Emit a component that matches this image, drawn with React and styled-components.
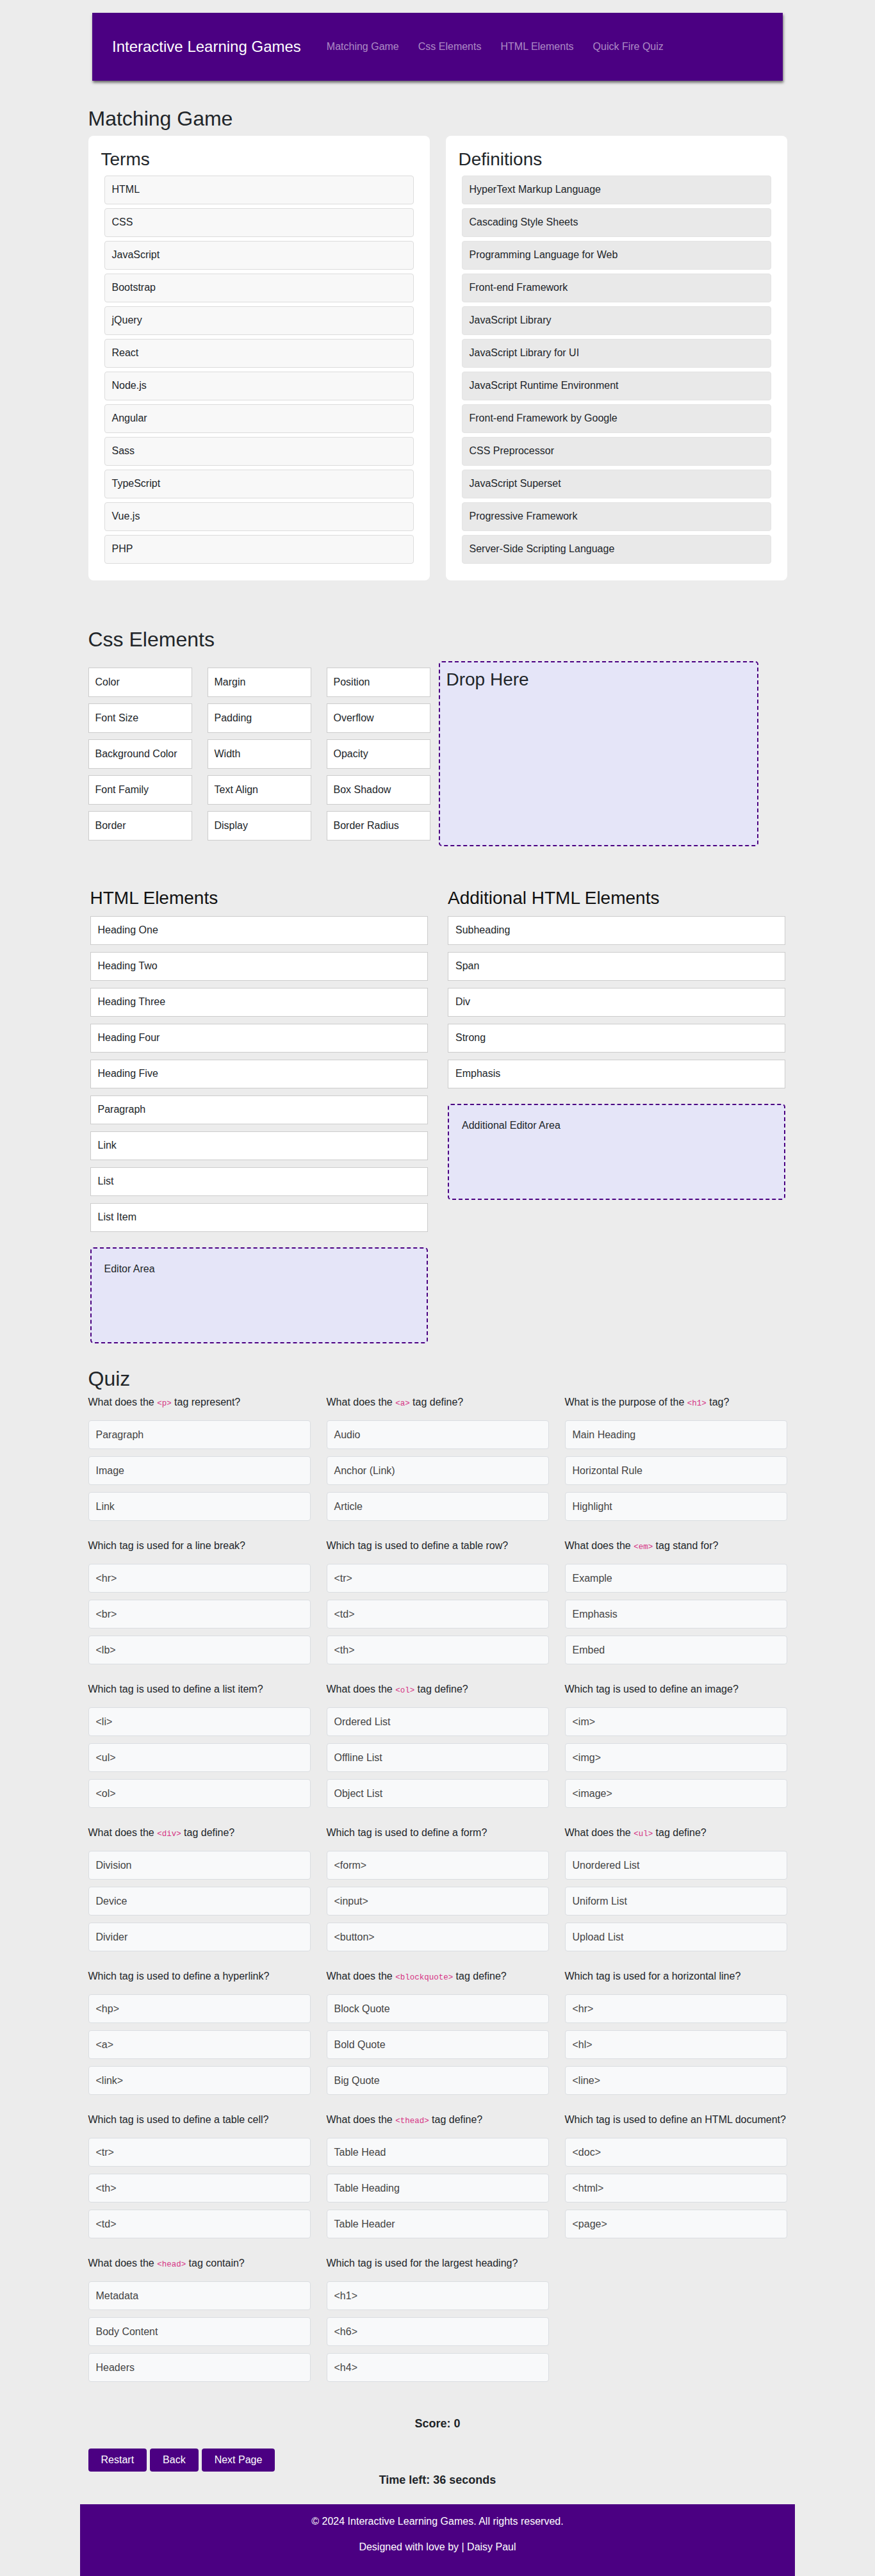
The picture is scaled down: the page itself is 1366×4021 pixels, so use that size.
import React from "react";
import styled, { createGlobalStyle } from "styled-components";

const terms = [
  "HTML", "CSS", "JavaScript", "Bootstrap", "jQuery", "React",
  "Node.js", "Angular", "Sass", "TypeScript", "Vue.js", "PHP",
];

const definitions = [
  "HyperText Markup Language",
  "Cascading Style Sheets",
  "Programming Language for Web",
  "Front-end Framework",
  "JavaScript Library",
  "JavaScript Library for UI",
  "JavaScript Runtime Environment",
  "Front-end Framework by Google",
  "CSS Preprocessor",
  "JavaScript Superset",
  "Progressive Framework",
  "Server-Side Scripting Language",
];

const cssProps = [
  "Color", "Margin", "Position",
  "Font Size", "Padding", "Overflow",
  "Background Color", "Width", "Opacity",
  "Font Family", "Text Align", "Box Shadow",
  "Border", "Display", "Border Radius",
];

const htmlElements = [
  "Heading One", "Heading Two", "Heading Three", "Heading Four", "Heading Five",
  "Paragraph", "Link", "List", "List Item",
];

const extraElements = ["Subheading", "Span", "Div", "Strong", "Emphasis"];

// question: [before, code, after] — code may be empty
const questions = [
  { q: ["What does the ", "<p>", " tag represent?"], options: ["Paragraph", "Image", "Link"] },
  { q: ["What does the ", "<a>", " tag define?"], options: ["Audio", "Anchor (Link)", "Article"] },
  { q: ["What is the purpose of the ", "<h1>", " tag?"], options: ["Main Heading", "Horizontal Rule", "Highlight"] },
  { q: ["Which tag is used for a line break?"], options: ["<hr>", "<br>", "<lb>"] },
  { q: ["Which tag is used to define a table row?"], options: ["<tr>", "<td>", "<th>"] },
  { q: ["What does the ", "<em>", " tag stand for?"], options: ["Example", "Emphasis", "Embed"] },
  { q: ["Which tag is used to define a list item?"], options: ["<li>", "<ul>", "<ol>"] },
  { q: ["What does the ", "<ol>", " tag define?"], options: ["Ordered List", "Offline List", "Object List"] },
  { q: ["Which tag is used to define an image?"], options: ["<im>", "<img>", "<image>"] },
  { q: ["What does the ", "<div>", " tag define?"], options: ["Division", "Device", "Divider"] },
  { q: ["Which tag is used to define a form?"], options: ["<form>", "<input>", "<button>"] },
  { q: ["What does the ", "<ul>", " tag define?"], options: ["Unordered List", "Uniform List", "Upload List"] },
  { q: ["Which tag is used to define a hyperlink?"], options: ["<hp>", "<a>", "<link>"] },
  { q: ["What does the ", "<blockquote>", " tag define?"], options: ["Block Quote", "Bold Quote", "Big Quote"] },
  { q: ["Which tag is used for a horizontal line?"], options: ["<hr>", "<hl>", "<line>"] },
  { q: ["Which tag is used to define a table cell?"], options: ["<tr>", "<th>", "<td>"] },
  { q: ["What does the ", "<thead>", " tag define?"], options: ["Table Head", "Table Heading", "Table Header"] },
  { q: ["Which tag is used to define an HTML document?"], options: ["<doc>", "<html>", "<page>"] },
  { q: ["What does the ", "<head>", " tag contain?"], options: ["Metadata", "Body Content", "Headers"] },
  { q: ["Which tag is used for the largest heading?"], options: ["<h1>", "<h6>", "<h4>"] },
];

const App = () => {
  return (
    <>
      <GlobalStyle />
      <Navbar>
        <Brand>Interactive Learning Games</Brand>
        <NavLink>Matching Game</NavLink>
        <NavLink>Css Elements</NavLink>
        <NavLink>HTML Elements</NavLink>
        <NavLink>Quick Fire Quiz</NavLink>
      </Navbar>

      <Main>
        <Section $top={40}>
          <SectionTitle>Matching Game</SectionTitle>
          <CardRow>
            <Card>
              <CardTitle>Terms</CardTitle>
              <MatchList>
                {terms.map((t) => (
                  <MatchItem key={t}>{t}</MatchItem>
                ))}
              </MatchList>
            </Card>
            <Card>
              <CardTitle>Definitions</CardTitle>
              <MatchList>
                {definitions.map((d) => (
                  <MatchItem key={d} $definition>{d}</MatchItem>
                ))}
              </MatchList>
            </Card>
          </CardRow>
        </Section>

        <Section $top={73}>
          <SectionTitle $gap={15}>Css Elements</SectionTitle>
          <CssRow>
            <CssGrid>
              {cssProps.map((p) => (
                <CssBox key={p}>{p}</CssBox>
              ))}
            </CssGrid>
            <DropZone>
              <DropTitle>Drop Here</DropTitle>
            </DropZone>
          </CssRow>
        </Section>

        <Section $top={64}>
          <HtmlColumns>
            <HtmlColumn>
              <ColumnTitle>HTML Elements</ColumnTitle>
              {htmlElements.map((h) => (
                <HtmlItem key={h}>{h}</HtmlItem>
              ))}
              <EditorArea>Editor Area</EditorArea>
            </HtmlColumn>
            <HtmlColumn>
              <ColumnTitle>Additional HTML Elements</ColumnTitle>
              {extraElements.map((h) => (
                <HtmlItem key={h}>{h}</HtmlItem>
              ))}
              <EditorArea>Additional Editor Area</EditorArea>
            </HtmlColumn>
          </HtmlColumns>
        </Section>

        <Section $top={36}>
          <SectionTitle $gap={6}>Quiz</SectionTitle>
          <QuizGrid>
            {questions.map((item, i) => (
              <QuestionBlock key={i}>
                <Question>
                  {item.q[0]}
                  {item.q[1] && <Code>{item.q[1]}</Code>}
                  {item.q[2]}
                </Question>
                {item.options.map((o) => (
                  <Option key={o}>{o}</Option>
                ))}
              </QuestionBlock>
            ))}
          </QuizGrid>
        </Section>

        <Score>Score: 0</Score>
        <ButtonRow>
          <Button>Restart</Button>
          <Button>Back</Button>
          <Button>Next Page</Button>
        </ButtonRow>
        <Timer>Time left: 36 seconds</Timer>
      </Main>

      <Footer>
        <FooterText>© 2024 Interactive Learning Games. All rights reserved.</FooterText>
        <FooterText>Designed with love by | Daisy Paul</FooterText>
      </Footer>
    </>
  );
};

export default App;

const GlobalStyle = createGlobalStyle`
  * { box-sizing: border-box; }
  body {
    margin: 0;
    background: #ececec;
    font-family: "Liberation Sans", Arial, sans-serif;
    font-size: 16px;
    line-height: 1.5;
    color: #212529;
  }
`;

const Navbar = styled.nav`
  width: 1078px;
  margin: 20px auto 0;
  padding: 35px 31px;
  background: #4b0082;
  display: flex;
  align-items: center;
  box-shadow: 1px 3px 4px rgba(0, 0, 0, 0.55);
`;

const Brand = styled.span`
  font-size: 24px;
  line-height: 36px;
  color: #fff;
  margin-right: 25px;
`;

const NavLink = styled.a`
  padding: 0 15px;
  font-size: 16px;
  color: rgba(255, 255, 255, 0.55);
  cursor: pointer;
`;

const Main = styled.main`
  width: 1091px;
  margin: 0 auto;
`;

const Section = styled.section`
  margin-top: ${(p) => p.$top}px;
`;

const SectionTitle = styled.h2`
  margin: 0 0 ${(p) => (p.$gap ?? 8)}px;
  font-size: 32px;
  font-weight: 400;
  line-height: 1.2;
  color: #212529;
`;

const CardRow = styled.div`
  display: grid;
  grid-template-columns: 1fr 1fr;
  gap: 25px;
`;

const Card = styled.div`
  background: #fff;
  border-radius: 8px;
  padding: 20px 20px 26px;
`;

const CardTitle = styled.h3`
  margin: 0 0 8px;
  font-size: 28px;
  font-weight: 400;
  line-height: 1.2;
`;

const MatchList = styled.div`
  display: flex;
  flex-direction: column;
  gap: 6px;
  padding: 0 5px;
`;

const MatchItem = styled.div`
  height: 45px;
  display: flex;
  align-items: center;
  padding: 0 11px;
  border-radius: 4px;
  border: 1px solid ${(p) => (p.$definition ? "#e3e3e3" : "#dcdcdc")};
  background: ${(p) => (p.$definition ? "#e9e9e9" : "#f8f8f8")};
  color: #212529;
  cursor: grab;
`;

const CssRow = styled.div`
  display: flex;
  align-items: flex-start;
  gap: 13px;
`;

const CssGrid = styled.div`
  display: grid;
  grid-template-columns: repeat(3, 162px);
  column-gap: 24px;
  row-gap: 10px;
  margin-top: 10px;
`;

const CssBox = styled.div`
  height: 46px;
  display: flex;
  align-items: center;
  padding: 0 10px;
  background: #fff;
  border: 1px solid #ccc;
  cursor: grab;
`;

const DropZone = styled.div`
  width: 499px;
  height: 289px;
  padding: 10px;
  background: #e5e5f8;
  border: 2px dashed #4b0082;
  border-radius: 5px;
`;

const DropTitle = styled.h3`
  margin: 0;
  font-size: 28px;
  font-weight: 400;
  line-height: 1.2;
`;

const HtmlColumns = styled.div`
  display: grid;
  grid-template-columns: 527px 527px;
  column-gap: 31.5px;
  padding-left: 3px;
  align-items: start;
`;

const HtmlColumn = styled.div`
  display: flex;
  flex-direction: column;
`;

const ColumnTitle = styled.h3`
  margin: 0 0 11px;
  font-size: 28px;
  font-weight: 400;
  line-height: 1.2;
  color: #111;
`;

const HtmlItem = styled.div`
  height: 45px;
  display: flex;
  align-items: center;
  padding: 0 11px;
  margin-bottom: 11px;
  background: #fff;
  border: 1px solid #ccc;
  cursor: grab;
`;

const EditorArea = styled.div`
  height: 150px;
  margin-top: 13px;
  padding: 20px;
  background: #e5e5f8;
  border: 2px dashed #4b0082;
  border-radius: 5px;
`;

const QuizGrid = styled.div`
  display: grid;
  grid-template-columns: repeat(3, 347px);
  column-gap: 25px;
  row-gap: 27px;
`;

const QuestionBlock = styled.div`
  display: flex;
  flex-direction: column;
  gap: 11px;
`;

const Question = styled.p`
  margin: 0 0 5px;
  height: 24px;
  line-height: 24px;
`;

const Code = styled.code`
  font-family: "Liberation Mono", "DejaVu Sans Mono", monospace;
  font-size: 12.5px;
  line-height: 1;
  color: #d63384;
`;

const Option = styled.div`
  height: 45px;
  display: flex;
  align-items: center;
  padding: 0 11px;
  background: #f8f9fa;
  border: 1px solid #dadde1;
  border-radius: 4px;
  color: #444;
  cursor: pointer;
`;

const Score = styled.div`
  margin-top: 52px;
  text-align: center;
  font-size: 18px;
  font-weight: 700;
  line-height: 27px;
`;

const ButtonRow = styled.div`
  display: flex;
  gap: 5px;
  margin-top: 25px;
`;

const Button = styled.button`
  height: 36px;
  padding: 0 20px;
  border: none;
  border-radius: 4px;
  background: #4b0082;
  color: #fff;
  font-family: inherit;
  font-size: 16px;
  cursor: pointer;
`;

const Timer = styled.div`
  text-align: center;
  font-size: 18px;
  font-weight: 700;
  line-height: 27px;
`;

const Footer = styled.footer`
  width: 1116px;
  margin: 24px auto 0;
  padding: 15px 0 17px;
  background: #4b0082;
  text-align: center;
  color: #fff;
`;

const FooterText = styled.p`
  margin: 0 0 16px;
  line-height: 24px;
`;
